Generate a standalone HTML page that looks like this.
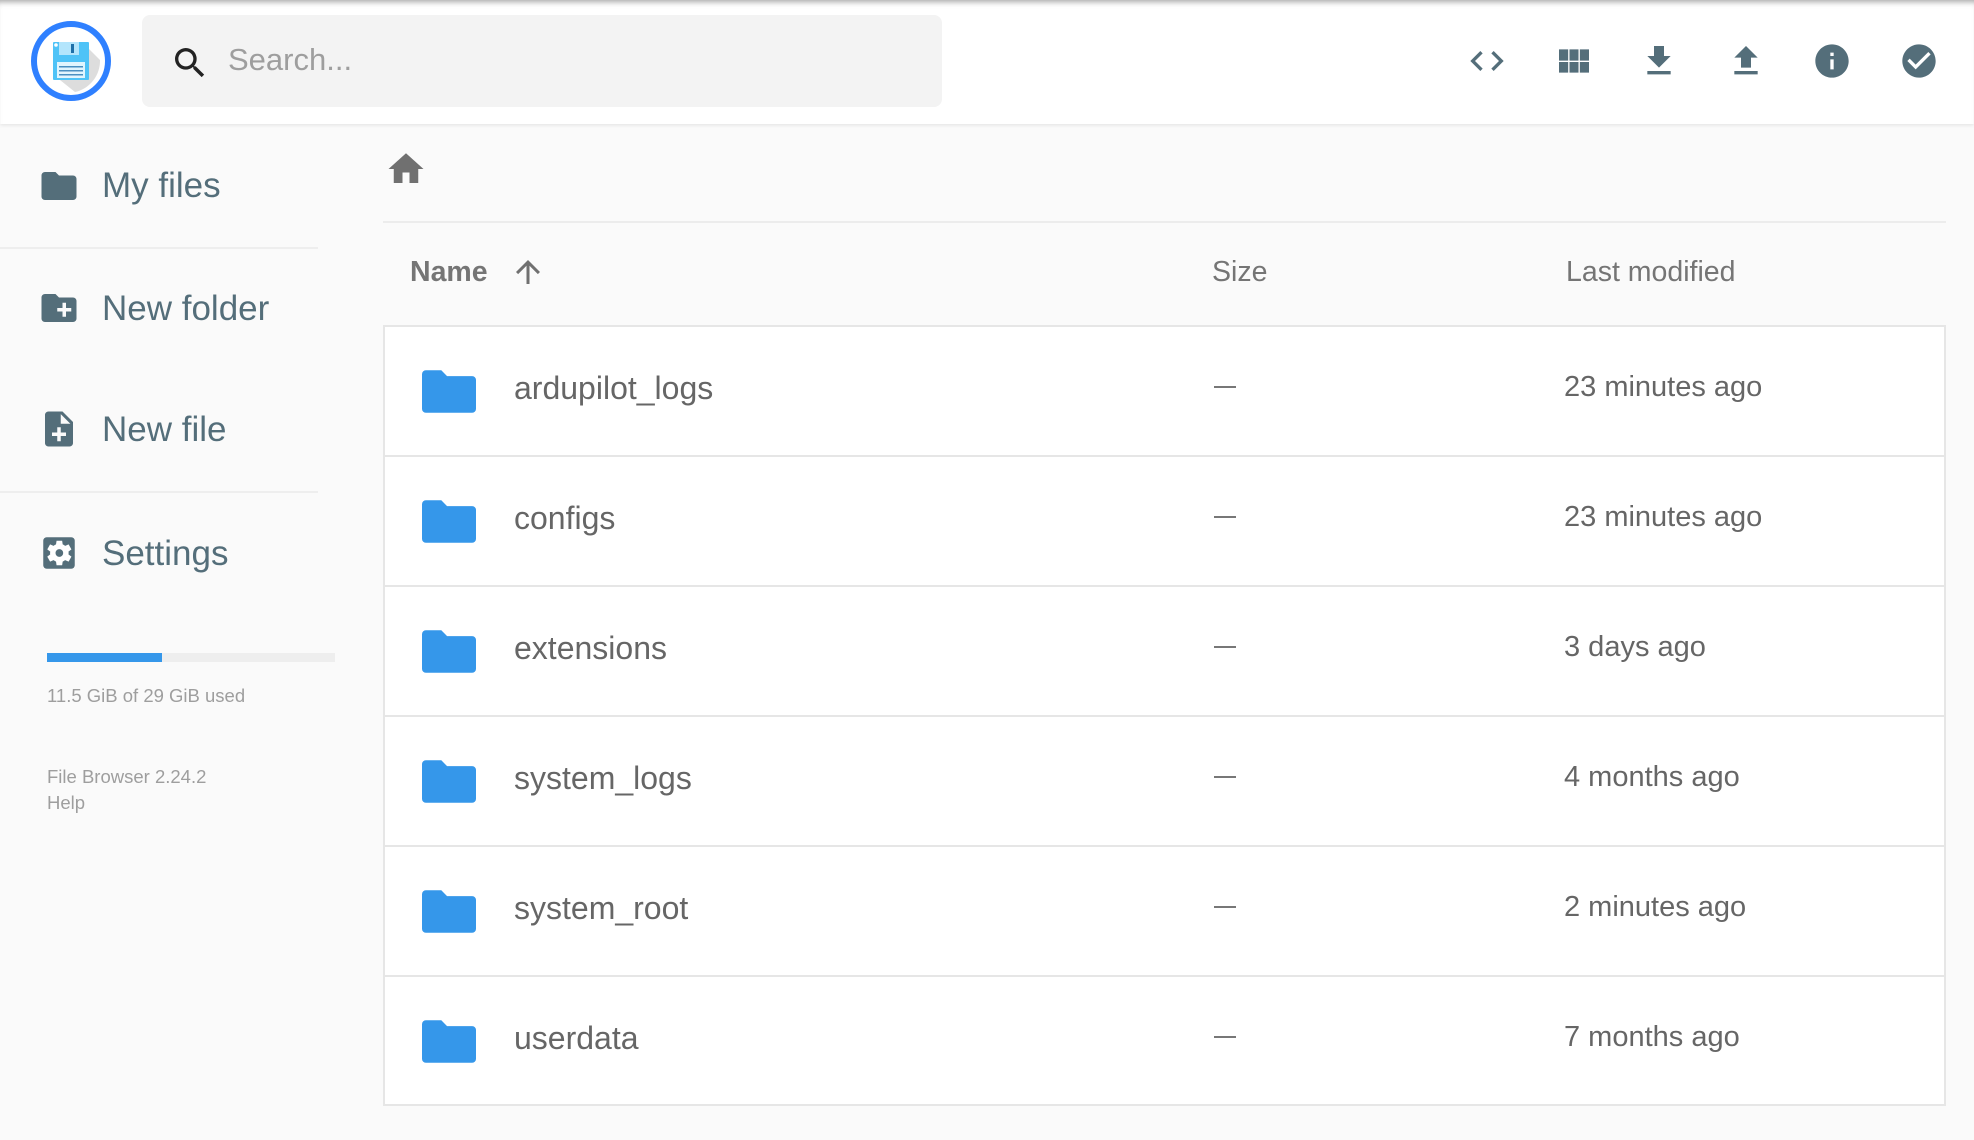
<!DOCTYPE html>
<html><head><meta charset="utf-8"><style>
*{margin:0;padding:0;box-sizing:border-box}
body{width:1974px;height:1140px;background:#fafafa;font-family:"Liberation Sans",sans-serif;position:relative;overflow:hidden}
.hdr{position:absolute;left:0;top:0;width:1974px;height:124px;background:#fff;box-shadow:0 1px 4px rgba(0,0,0,.1),inset 0 6px 6px -4px rgba(0,0,0,.35)}
.search{position:absolute;left:142px;top:15px;width:800px;height:92px;background:#f3f3f3;border-radius:8px}
.search span{position:absolute;left:86px;top:27px;font-size:31px;color:#9e9e9e}
.ico{position:absolute;width:40px;height:40px;top:41px}
.side{position:absolute;left:0;width:320px;color:#546e7a;font-size:35px}
.side .it{position:absolute;left:102px;transform:translateY(-50%)}
.sico{position:absolute;left:38px}
.div{position:absolute;left:0;width:318px;height:2px;background:#eeeeee}
.small{position:absolute;left:47px;font-size:18.5px;color:#9e9e9e}
.th{position:absolute;top:256px;font-size:28.5px;color:#757575}
.tbl{position:absolute;left:383px;top:325px;width:1563px;height:781px;background:#fff;border:2px solid #e6e6e6}
.row{position:absolute;left:0;width:1561px;height:130px;border-bottom:2px solid #e6e6e6}
.row .f{position:absolute;left:37px;top:43px}
.row .n{position:absolute;left:129px;top:43px;font-size:32px;color:#666}
.row .d{position:absolute;left:829px;top:59px;width:22px;height:2px;background:#777}
.row .t{position:absolute;left:1179px;top:44px;font-size:29px;color:#666}
</style></head><body>
<div class="hdr">
 <svg style="position:absolute;left:30px;top:20px" width="82" height="82" viewBox="0 0 82 82">
  <circle cx="41" cy="41" r="37" fill="#fff" stroke="#2f80ff" stroke-width="6"/>
  <path d="M54 24 L70 40 A32 32 0 0 1 45 72 L30 60Z" fill="#ddd"/>
  <rect x="23" y="22" width="36" height="38" rx="1" fill="#4fc3f7"/>
  <rect x="29" y="22" width="20" height="13" fill="#b3e5fc"/>
  <rect x="41" y="24" width="3" height="9" fill="#1e6fa8"/>
  <rect x="27" y="42" width="28" height="16" fill="#e1f5fe"/>
  <rect x="29" y="46" width="24" height="1.5" fill="#4a90c2"/><rect x="29" y="50" width="24" height="1.5" fill="#4a90c2"/><rect x="29" y="54" width="24" height="1.5" fill="#4a90c2"/>
  <circle cx="26" cy="25" r="1.8" fill="#fff"/>
 </svg>
 <div class="search">
  <svg style="position:absolute;left:28px;top:28px" width="40" height="40" viewBox="0 0 24 24"><path fill="#222" d="M15.5 14h-.79l-.28-.27A6.47 6.47 0 0 0 16 9.5 6.5 6.5 0 1 0 9.5 16c1.61 0 3.09-.59 4.23-1.57l.27.28v.79l5 4.99L20.49 19l-4.99-5zm-6 0C7.01 14 5 11.99 5 9.5S7.01 5 9.5 5 14 7.01 14 9.5 11.99 14 9.5 14z"/></svg>
  <span>Search...</span>
 </div>
 <svg class="ico" style="left:1467px" viewBox="0 0 24 24"><path fill="#546e7a" d="M9.4 16.6 4.8 12l4.6-4.6L8 6l-6 6 6 6 1.4-1.4zm5.2 0 4.6-4.6-4.6-4.6L16 6l6 6-6 6-1.4-1.4z"/></svg>
 <svg class="ico" style="left:1554px" viewBox="0 0 24 24"><path fill="#546e7a" d="M3 5h5.5v6.8H3zM9.3 5h5.4v6.8H9.3zM15.5 5H21v6.8h-5.5zM3 12.6h5.5V19H3zM9.3 12.6h5.4V19H9.3zM15.5 12.6H21V19h-5.5z"/></svg>
 <svg class="ico" style="left:1639px" viewBox="0 0 24 24"><path fill="#546e7a" d="M19 9h-4V3H9v6H5l7 7 7-7zM5 18v2h14v-2H5z"/></svg>
 <svg class="ico" style="left:1726px" viewBox="0 0 24 24"><path fill="#546e7a" d="M9 16h6v-6h4l-7-7-7 7h4zm-4 2h14v2H5z"/></svg>
 <svg class="ico" style="left:1812px" viewBox="0 0 24 24"><path fill="#546e7a" d="M12 2C6.48 2 2 6.48 2 12s4.48 10 10 10 10-4.48 10-10S17.52 2 12 2zm1 15h-2v-6h2v6zm0-8h-2V7h2v2z"/></svg>
 <svg class="ico" style="left:1899px" viewBox="0 0 24 24"><path fill="#546e7a" d="M12 2C6.48 2 2 6.48 2 12s4.48 10 10 10 10-4.48 10-10S17.52 2 12 2zm-2 15-5-5 1.41-1.41L10 14.17l7.59-7.59L19 8l-9 9z"/></svg>
</div>

<div class="side" style="top:0;height:1140px">
 <svg class="sico" style="top:165px" width="42" height="42" viewBox="0 0 24 24"><path fill="#546e7a" d="M10 4H4c-1.1 0-2 .9-2 2v12c0 1.1.9 2 2 2h16c1.1 0 2-.9 2-2V8c0-1.1-.9-2-2-2h-8l-2-2z"/></svg>
 <div class="it" style="top:186px">My files</div>
 <div class="div" style="top:247px"></div>
 <svg class="sico" style="top:287px" width="42" height="42" viewBox="0 0 24 24"><path fill="#546e7a" d="M20 6h-8l-2-2H4c-1.1 0-2 .9-2 2v12c0 1.1.9 2 2 2h16c1.1 0 2-.9 2-2V8c0-1.1-.9-2-2-2zm-1 8h-3v3h-2v-3h-3v-2h3V9h2v3h3v2z"/></svg>
 <div class="it" style="top:309px">New folder</div>
 <svg class="sico" style="top:408px" width="42" height="42" viewBox="0 0 24 24"><path fill="#546e7a" d="M14 2H6c-1.1 0-2 .9-2 2v16c0 1.1.9 2 2 2h12c1.1 0 2-.9 2-2V8l-6-6zm2 14h-3v3h-2v-3H8v-2h3v-3h2v3h3v2zm-3-7V3.5L18.5 9H13z"/></svg>
 <div class="it" style="top:430px">New file</div>
 <div class="div" style="top:491px"></div>
 <svg class="sico" style="top:532px" width="42" height="42" viewBox="0 0 24 24"><rect x="3" y="3" width="18" height="18" rx="2" fill="#546e7a"/><path fill="#fff" d="M17.4 12.8c0-.3.1-.5.1-.8s0-.5-.1-.8l1.7-1.3-1.6-2.8-2 .8c-.4-.3-.9-.6-1.4-.8L13.8 5h-3.2l-.3 2.1c-.5.2-1 .5-1.4.8l-2-.8-1.6 2.8 1.7 1.3c0 .3-.1.5-.1.8s0 .5.1.8l-1.7 1.3 1.6 2.8 2-.8c.4.3.9.6 1.4.8l.3 2.1h3.2l.3-2.1c.5-.2 1-.5 1.4-.8l2 .8 1.6-2.8-1.7-1.3zM12.2 14.2a2.2 2.2 0 1 1 0-4.4 2.2 2.2 0 0 1 0 4.4z"/></svg>
 <div class="it" style="top:554px">Settings</div>
 <div style="position:absolute;left:47px;top:653px;width:288px;height:9px;background:#eee"><div style="width:115px;height:9px;background:#3597ea"></div></div>
 <div class="small" style="top:685px">11.5 GiB of 29 GiB used</div>
 <div class="small" style="top:766px">File Browser 2.24.2</div>
 <div class="small" style="top:792px">Help</div>
</div>

<svg style="position:absolute;left:385px;top:148px" width="42" height="42" viewBox="0 0 24 24"><path fill="#707070" d="M10 20v-6h4v6h5v-8h3L12 3 2 12h3v8z"/></svg>
<div style="position:absolute;left:383px;top:221px;width:1563px;height:2px;background:#ececec"></div>
<div class="th" style="left:410px;font-weight:bold">Name</div>
<svg style="position:absolute;left:510px;top:254px" width="36" height="36" viewBox="0 0 24 24"><path fill="#707070" d="M4 12l1.41 1.41L11 7.83V20h2V7.83l5.58 5.59L20 12l-8-8-8 8z"/></svg>
<div class="th" style="left:1212px">Size</div>
<div class="th" style="left:1566px">Last modified</div>

<div class="tbl">
 <div class="row" style="top:0"><svg class="f" width="54" height="43" viewBox="0 0 56 44"><path fill="#3597ea" d="M4 0h16l6 6h26a4 4 0 0 1 4 4v30a4 4 0 0 1-4 4H4a4 4 0 0 1-4-4V4a4 4 0 0 1 4-4z"/></svg><div class="n">ardupilot_logs</div><div class="d"></div><div class="t">23 minutes ago</div></div>
 <div class="row" style="top:130px"><svg class="f" width="54" height="43" viewBox="0 0 56 44"><path fill="#3597ea" d="M4 0h16l6 6h26a4 4 0 0 1 4 4v30a4 4 0 0 1-4 4H4a4 4 0 0 1-4-4V4a4 4 0 0 1 4-4z"/></svg><div class="n">configs</div><div class="d"></div><div class="t">23 minutes ago</div></div>
 <div class="row" style="top:260px"><svg class="f" width="54" height="43" viewBox="0 0 56 44"><path fill="#3597ea" d="M4 0h16l6 6h26a4 4 0 0 1 4 4v30a4 4 0 0 1-4 4H4a4 4 0 0 1-4-4V4a4 4 0 0 1 4-4z"/></svg><div class="n">extensions</div><div class="d"></div><div class="t">3 days ago</div></div>
 <div class="row" style="top:390px"><svg class="f" width="54" height="43" viewBox="0 0 56 44"><path fill="#3597ea" d="M4 0h16l6 6h26a4 4 0 0 1 4 4v30a4 4 0 0 1-4 4H4a4 4 0 0 1-4-4V4a4 4 0 0 1 4-4z"/></svg><div class="n">system_logs</div><div class="d"></div><div class="t">4 months ago</div></div>
 <div class="row" style="top:520px"><svg class="f" width="54" height="43" viewBox="0 0 56 44"><path fill="#3597ea" d="M4 0h16l6 6h26a4 4 0 0 1 4 4v30a4 4 0 0 1-4 4H4a4 4 0 0 1-4-4V4a4 4 0 0 1 4-4z"/></svg><div class="n">system_root</div><div class="d"></div><div class="t">2 minutes ago</div></div>
 <div class="row" style="top:650px;border-bottom:none"><svg class="f" width="54" height="43" viewBox="0 0 56 44"><path fill="#3597ea" d="M4 0h16l6 6h26a4 4 0 0 1 4 4v30a4 4 0 0 1-4 4H4a4 4 0 0 1-4-4V4a4 4 0 0 1 4-4z"/></svg><div class="n">userdata</div><div class="d"></div><div class="t">7 months ago</div></div>
</div>
</body></html>
